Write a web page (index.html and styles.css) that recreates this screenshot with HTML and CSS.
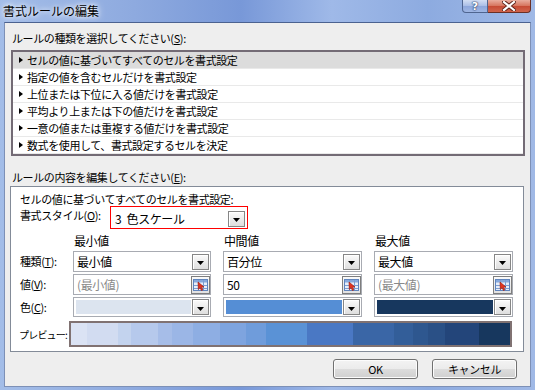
FILE: index.html
```html
<!DOCTYPE html>
<html lang="ja">
<head>
    <meta charset="UTF-8">
    <title>書式ルールの編集</title>
    <link rel="stylesheet" href="styles.css">
</head>
<body>
    <div class="window">
        <div class="titlebar">
            <span class="title">書式ルールの編集</span>
            <div class="caption-buttons">
                <span class="cap-btn help">?</span>
                <span class="cap-btn close">
                    <svg width="14" height="10" viewBox="0 0 14 10">
                        <path d="M2 1 L12 9 M12 1 L2 9" stroke="#5a2018" stroke-width="4" stroke-linecap="square"/>
                        <path d="M2 1 L12 9 M12 1 L2 9" stroke="#ffffff" stroke-width="2.2" stroke-linecap="square"/>
                    </svg>
                </span>
            </div>
        </div>

        <div class="client">
            <div class="label">ルールの種類を選択してください(<u>S</u>):</div>
            <ul class="rule-list">
                <li class="selected">セルの値に基づいてすべてのセルを書式設定</li>
                <li>指定の値を含むセルだけを書式設定</li>
                <li>上位または下位に入る値だけを書式設定</li>
                <li>平均より上または下の値だけを書式設定</li>
                <li>一意の値または重複する値だけを書式設定</li>
                <li>数式を使用して、書式設定するセルを決定</li>
            </ul>

            <div class="label second">ルールの内容を編集してください(<u>E</u>):</div>
            <div class="panel">
                <div class="desc">セルの値に基づいてすべてのセルを書式設定:</div>
                <div class="style-row">
                    <span class="style-label">書式スタイル(<u>O</u>):</span>
                    <div class="highlight">
                        <span class="combo-text spaced">3 色スケール</span>
                        <span class="drop"><svg width="7" height="4" viewBox="0 0 7 4"><polygon points="0,0 7,0 3.5,4" fill="#000"/></svg></span>
                    </div>
                </div>

                <div class="scale-grid">
                    <span></span>
                    <span class="head">最小値</span>
                    <span class="head">中間値</span>
                    <span class="head">最大値</span>

                    <span class="row-label">種類(<u>T</u>):</span>
                    <div class="combo"><span class="combo-text">最小値</span><span class="drop"><svg width="7" height="4" viewBox="0 0 7 4"><polygon points="0,0 7,0 3.5,4" fill="#000"/></svg></span></div>
                    <div class="combo"><span class="combo-text">百分位</span><span class="drop"><svg width="7" height="4" viewBox="0 0 7 4"><polygon points="0,0 7,0 3.5,4" fill="#000"/></svg></span></div>
                    <div class="combo"><span class="combo-text">最大値</span><span class="drop"><svg width="7" height="4" viewBox="0 0 7 4"><polygon points="0,0 7,0 3.5,4" fill="#000"/></svg></span></div>

                    <span class="row-label">値(<u>V</u>):</span>
                    <div class="combo"><span class="combo-text muted">(最小値)</span><span class="picker"><svg width="15" height="12" viewBox="0 0 15 12"><rect x="0.5" y="0.5" width="14" height="11" fill="#e6eefa" stroke="#5f84bd"/><rect x="1" y="1" width="13" height="2.5" fill="#86a8dc"/><path d="M1 6.5 H14 M1 9.5 H14 M5.5 1 V11 M10.5 1 V11" stroke="#7d9fd2" stroke-width="1"/><path d="M5 3 L11 8 L8.6 8.2 L9.8 11 L8.4 11.6 L7.2 8.8 L5.3 10.4 Z" fill="#e2341f" stroke="#9a1c10" stroke-width="0.6"/></svg></span></div>
                    <div class="combo"><span class="combo-text">50</span><span class="picker"><svg width="15" height="12" viewBox="0 0 15 12"><rect x="0.5" y="0.5" width="14" height="11" fill="#e6eefa" stroke="#5f84bd"/><rect x="1" y="1" width="13" height="2.5" fill="#86a8dc"/><path d="M1 6.5 H14 M1 9.5 H14 M5.5 1 V11 M10.5 1 V11" stroke="#7d9fd2" stroke-width="1"/><path d="M5 3 L11 8 L8.6 8.2 L9.8 11 L8.4 11.6 L7.2 8.8 L5.3 10.4 Z" fill="#e2341f" stroke="#9a1c10" stroke-width="0.6"/></svg></span></div>
                    <div class="combo"><span class="combo-text muted">(最大値)</span><span class="picker"><svg width="15" height="12" viewBox="0 0 15 12"><rect x="0.5" y="0.5" width="14" height="11" fill="#e6eefa" stroke="#5f84bd"/><rect x="1" y="1" width="13" height="2.5" fill="#86a8dc"/><path d="M1 6.5 H14 M1 9.5 H14 M5.5 1 V11 M10.5 1 V11" stroke="#7d9fd2" stroke-width="1"/><path d="M5 3 L11 8 L8.6 8.2 L9.8 11 L8.4 11.6 L7.2 8.8 L5.3 10.4 Z" fill="#e2341f" stroke="#9a1c10" stroke-width="0.6"/></svg></span></div>

                    <span class="row-label">色(<u>C</u>):</span>
                    <div class="combo color"><span class="swatch min"></span><span class="drop"><svg width="7" height="4" viewBox="0 0 7 4"><polygon points="0,0 7,0 3.5,4" fill="#000"/></svg></span></div>
                    <div class="combo color"><span class="swatch mid"></span><span class="drop"><svg width="7" height="4" viewBox="0 0 7 4"><polygon points="0,0 7,0 3.5,4" fill="#000"/></svg></span></div>
                    <div class="combo color"><span class="swatch max"></span><span class="drop"><svg width="7" height="4" viewBox="0 0 7 4"><polygon points="0,0 7,0 3.5,4" fill="#000"/></svg></span></div>
                </div>

                <div class="preview-row">
                    <span class="preview-label">プレビュー:</span>
                    <div class="preview"></div>
                </div>
            </div>

            <div class="actions">
                <button class="btn">OK</button>
                <button class="btn">キャンセル</button>
            </div>
        </div>
    </div>
</body>
</html>
```

FILE: styles.css
```css
body {
    margin: 0;
    width: 535px;
    height: 390px;
    overflow: hidden;
    font-family: "Noto Sans CJK JP", "Liberation Sans", sans-serif;
    font-size: 11px;
    letter-spacing: -0.4px;
    color: #000;
}

.window {
    height: 390px;
    display: flex;
    flex-direction: column;
    background: linear-gradient(to right, #a3bde8, #8eaadf 25%, #7898d8 45%, #9fb9e8 62%, #8dabe0 80%, #a0b9e6);
}

/* title bar */
.titlebar {
    height: 22px;
    display: flex;
    align-items: flex-start;
    flex-shrink: 0;
}

.title {
    padding: 3px 0 0 3px;
    font-size: 12px;
    line-height: 16px;
    letter-spacing: 0;
    text-shadow: 0 0 4px #fff, 0 0 8px #fff;
}

.caption-buttons {
    margin-left: auto;
    margin-right: 4px;
    display: flex;
}

.cap-btn {
    height: 13px;
    display: flex;
    align-items: center;
    justify-content: center;
    box-sizing: border-box;
}

.help {
    width: 26px;
    background: linear-gradient(#d3def3, #a9bde6 50%, #8ea7db 51%, #9fb6e4);
    border: 1px solid #4f6590;
    border-top: none;
    border-radius: 0 0 0 4px;
    color: #fff;
    font-family: "DejaVu Sans", sans-serif;
    font-weight: bold;
    font-size: 11px;
    letter-spacing: 0;
    text-shadow: 0 0 1px #33466e, 0 0 1px #33466e, 0 0 2px #33466e;
}

.close {
    width: 43px;
    background: linear-gradient(#e9ad9e, #d6735c 50%, #c64a33 51%, #d0644c);
    border: 1px solid #6b3026;
    border-top: none;
    border-left: none;
    border-radius: 0 0 4px 0;
}

/* client area */
.client {
    flex: 1;
    margin: 0 4px 3px;
    background: #eeeeee;
    border: 1px solid #7d90b6;
    border-top-color: #4b6290;
    padding: 7px 5px 0 6px;
    display: flex;
    flex-direction: column;
}

.label {
    margin-left: 1px;
    line-height: 16px;
}

.label.second {
    margin-top: 13px;
}

.rule-list {
    list-style: none;
    margin: 4px 0 0;
    padding: 0;
    background: #fff;
    border: 2px solid #736b75;
}

.rule-list li {
    height: 16px;
    line-height: 16px;
    border-bottom: 1px solid #e9e9e9;
    padding-left: 14px;
    position: relative;
}

.rule-list li::before {
    content: "";
    position: absolute;
    left: 6px;
    top: 5px;
    border-left: 4px solid #000;
    border-top: 3px solid transparent;
    border-bottom: 3px solid transparent;
}

.rule-list li.selected {
    background: #dcdcdc;
}

/* edit panel */
.panel {
    margin: 1px 1px 0 -1px;
    background: #fff;
    border: 1px solid #838b98;
    padding: 5px 0 4px 9px;
}

.desc {
    line-height: 14px;
}

.style-row {
    display: flex;
    height: 23px;
}

.style-label {
    width: 90px;
    padding-top: 1px;
    line-height: 16px;
}

.highlight {
    width: 138px;
    box-sizing: border-box;
    border: 1px solid #ff0000;
    display: flex;
    align-items: center;
    padding: 2px 1px 0 4px;
}

.combo-text {
    flex: 1;
    font-size: 12px;
    line-height: 16px;
}

.combo-text.spaced {
    word-spacing: 3px;
}

.muted {
    color: #8a8a8a;
}

.scale-grid {
    margin-top: 3px;
    display: grid;
    grid-template-columns: 41px 138px 139px 139px;
    grid-template-rows: 17px 21px 21px 20px;
    column-gap: 12px;
    row-gap: 2px;
}

.head {
    padding-left: 1px;
    font-size: 12px;
    line-height: 17px;
}

.row-label {
    line-height: 21px;
    white-space: nowrap;
}

.combo {
    box-sizing: border-box;
    border: 1px solid #a8abb2;
    background: #fff;
    display: flex;
    align-items: center;
    padding-left: 3px;
}

.drop {
    width: 17px;
    height: 16px;
    box-sizing: border-box;
    margin-right: 1px;
    border: 1px solid #868686;
    background: linear-gradient(#fbfbfb, #ececec 50%, #dedede);
    box-shadow: inset 1px 1px 0 #fff;
    display: flex;
    align-items: center;
    justify-content: center;
    padding-top: 3px;
}

.picker {
    width: 19px;
    height: 18px;
    box-sizing: border-box;
    border: 1px solid #7e7e7e;
    background: linear-gradient(#fafafa, #e2e2e2);
    display: flex;
    align-items: center;
    justify-content: center;
}

.combo.color {
    padding-left: 2px;
}

.swatch {
    flex: 1;
    height: 14px;
    margin-right: 1px;
}

.swatch.min { background: #dce4ef; }
.swatch.mid { background: #558ed5; }
.swatch.max { background: #17375e; }

.preview-row {
    margin-top: 4px;
    display: flex;
    align-items: center;
}

.preview-label {
    width: 50px;
    margin-left: -1px;
    white-space: nowrap;
    font-size: 10px;
    letter-spacing: -0.8px;
}

.preview {
    width: 443px;
    height: 26px;
    box-sizing: border-box;
    border: 2px solid #807272;
    background: linear-gradient(to right,
        #dbe3f4 0%, #dbe3f4 3.6%,
        #d2dcf1 3.6%, #d2dcf1 10.6%,
        #c3d3ee 10.6%, #c3d3ee 13.7%,
        #b6c9ec 13.7%, #b6c9ec 19.9%,
        #a6bde8 19.9%, #a6bde8 23.1%,
        #9bb6e6 23.1%, #9bb6e6 27.7%,
        #8eaee3 27.7%, #8eaee3 33.9%,
        #7ea4df 33.9%, #7ea4df 39.8%,
        #6f9cdb 39.8%, #6f9cdb 44.5%,
        #5a92d6 44.5%, #5a92d6 53.8%,
        #4a78c4 53.8%, #4a78c4 64.3%,
        #3a66a6 64.3%, #3a66a6 73.6%,
        #335e99 73.6%, #335e99 77.9%,
        #2e578f 77.9%, #2e578f 81.4%,
        #2a5086 81.4%, #2a5086 85.3%,
        #23457a 85.3%, #23457a 93%,
        #17375e 93%, #17375e 100%);
}

/* dialog buttons */
.actions {
    margin-top: 7px;
    margin-right: 8px;
    display: flex;
    justify-content: flex-end;
    gap: 14px;
}

.btn {
    width: 85px;
    height: 20px;
    padding: 0;
    border: 1px solid #707070;
    border-radius: 3px;
    background: linear-gradient(#f3f3f3, #ebebeb 50%, #dcdcdc 51%, #d0d0d0);
    box-shadow: inset 0 0 0 1px #fcfcfc;
    font-family: "Noto Sans CJK JP", "Liberation Sans", sans-serif;
    font-size: 11px;
    letter-spacing: -0.4px;
    color: #000;
}
```
